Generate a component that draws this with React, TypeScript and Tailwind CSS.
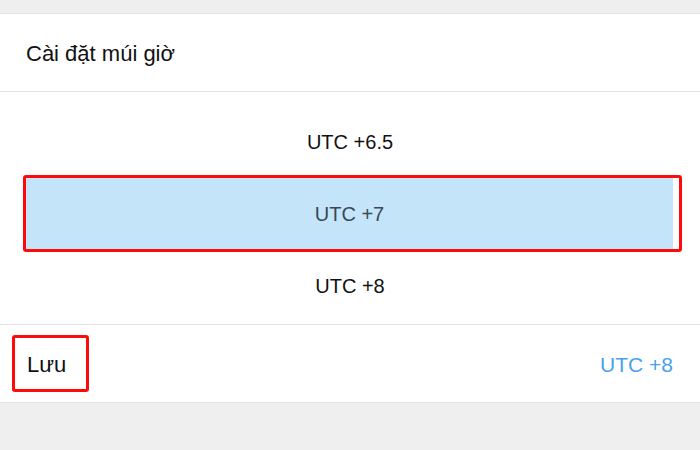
import * as React from 'react';

const zones = ['UTC +6.5', 'UTC +7', 'UTC +8'];

export default function App() {
  const selected = 1;

  return (
    <div className="w-[700px] h-[450px] bg-[#efefef] pt-[13px] font-['Liberation_Sans',Arial,sans-serif] overflow-hidden">
      {/* Header */}
      <div className="h-[79px] bg-white border-y border-[#e3e3e3] flex items-center pl-[26px] pt-[2px]">
        <span className="text-[22px] text-[#111]">Cài đặt múi giờ</span>
      </div>

      {/* Picker */}
      <div className="h-[232px] bg-white pt-[22px] pb-[10px] flex flex-col gap-[5px]">
        {zones.map((z, i) =>
          i === selected ? (
            <div
              key={z}
              className="h-[77px] mx-[23px] mr-[18px] border-[3px] border-[#ff0a0a] rounded-[3px] flex mb-[1px]"
            >
              <div className="flex-1 bg-[#c4e4fa] mr-[6px] flex items-center justify-center">
                <span className="text-[20px] text-[#3a4853]">{z}</span>
              </div>
            </div>
          ) : (
            <div key={z} className="h-[56px] flex items-center justify-center">
              <span className="text-[20px] text-[#111]">{z}</span>
            </div>
          )
        )}
      </div>

      {/* Save row */}
      <div className="h-[79px] bg-white border-y border-[#e3e3e3] flex items-center justify-between pl-[12px] pr-[27px]">
        <span className="w-[77px] h-[57px] border-[3px] border-[#ff0a0a] rounded-[3px] flex items-center pl-[12px] pt-[2px] text-[22px] text-[#111]">
          Lưu
        </span>
        <span className="text-[21px] text-[#4a9ff0] pt-[2px]">UTC +8</span>
      </div>
    </div>
  );
}
